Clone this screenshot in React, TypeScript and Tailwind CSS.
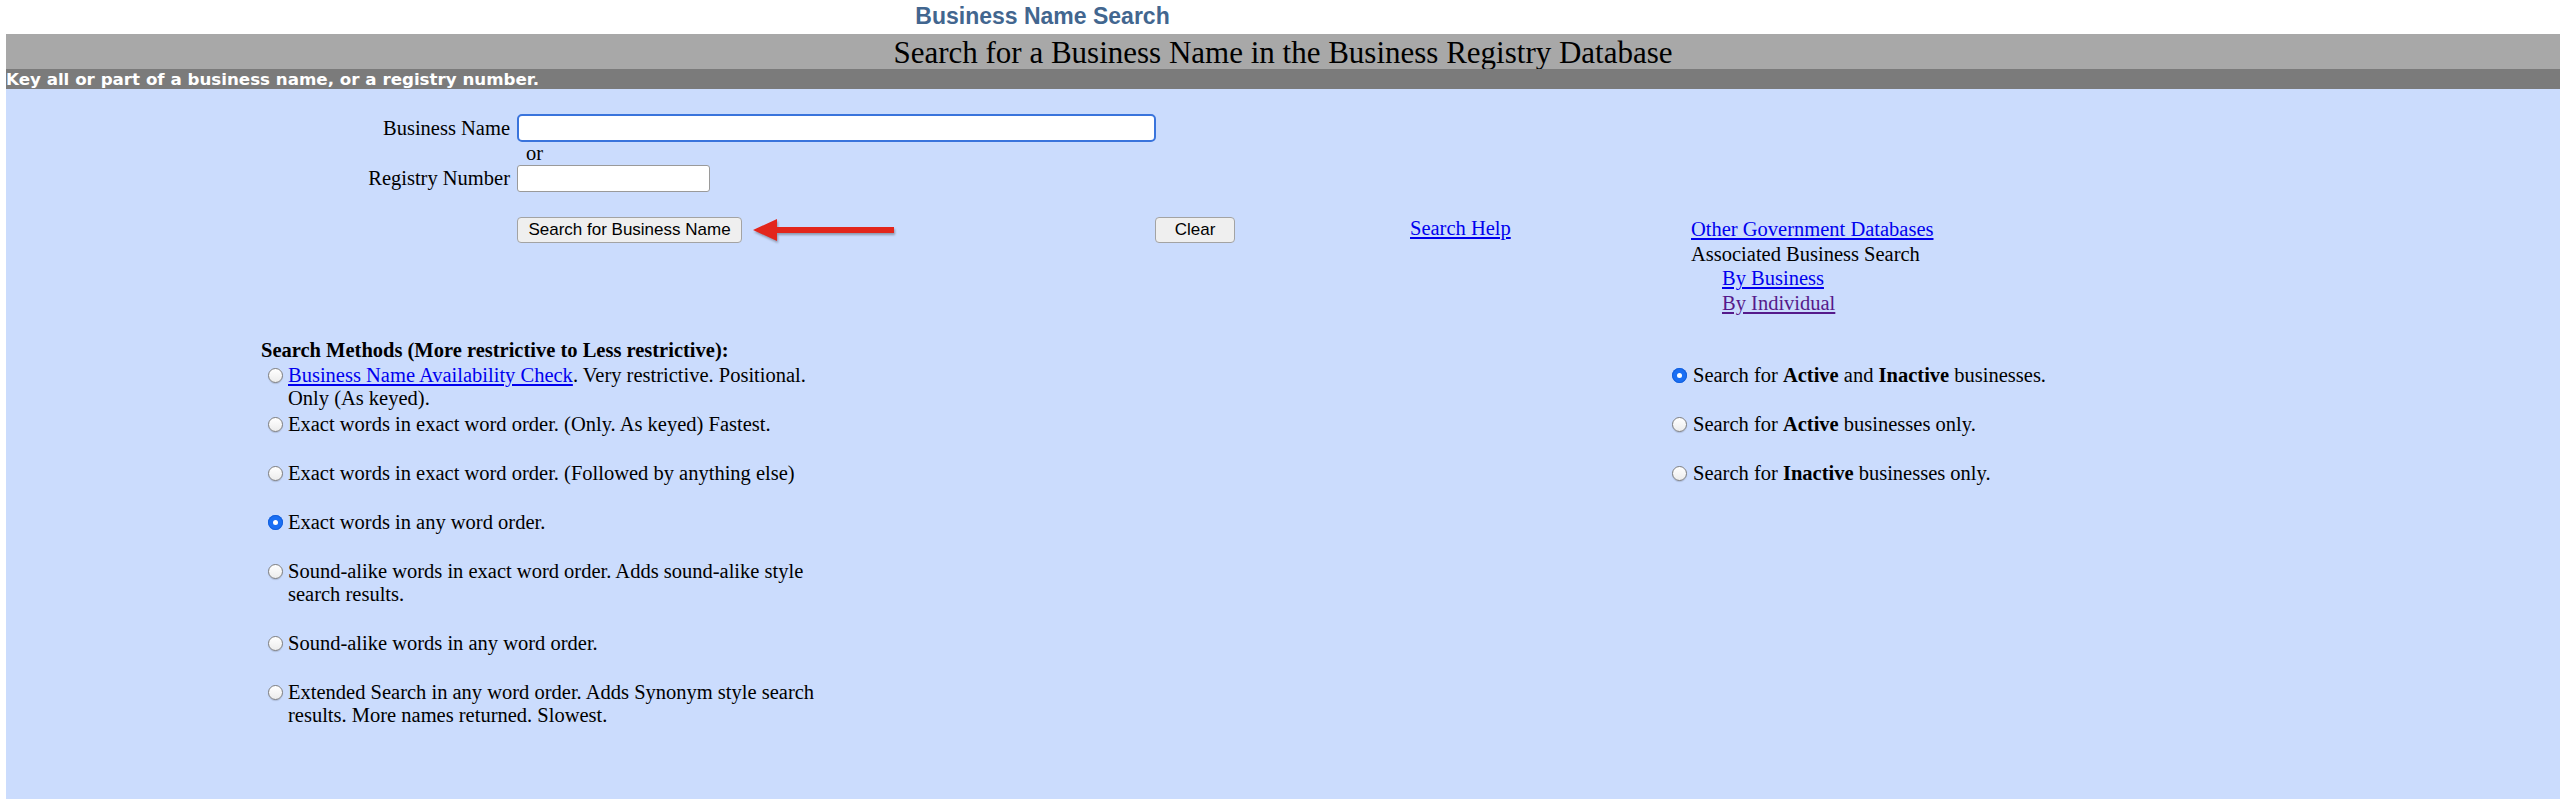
import type { ReactNode } from 'react';

const serif = "font-['Liberation_Serif','Times_New_Roman',serif]";
const sans = "font-['Liberation_Sans',Arial,sans-serif]";

function Radio({ checked = false }: { checked?: boolean }) {
  if (checked) {
    return (
      <span className="mt-[4px] flex h-[15px] w-[15px] shrink-0 items-center justify-center rounded-full bg-[#1a6ff4] shadow-[inset_0_0_0_1px_#1460dc]">
        <span className="h-[5px] w-[5px] rounded-full bg-white" />
      </span>
    );
  }
  return (
    <span className="mt-[4px] block h-[15px] w-[15px] shrink-0 rounded-full border border-[#7e7e7e] bg-gradient-to-b from-white to-[#ececec] shadow-[0_1px_1px_rgba(0,0,0,0.15)]" />
  );
}

function TextLink({ children, visited = false }: { children: ReactNode; visited?: boolean }) {
  return (
    <a
      href="#"
      className={visited ? 'text-[#551a8b] underline underline-offset-[2px]' : 'text-[#0000ee] underline underline-offset-[2px]'}
    >
      {children}
    </a>
  );
}

type Row = {
  checked?: boolean;
  body: ReactNode;
  blank?: boolean;
  status?: ReactNode;
  statusChecked?: boolean;
};

const ROWS: Row[] = [
  {
    body: (
      <>
        <TextLink>Business Name Availability Check</TextLink>. Very restrictive. Positional.
        <br />
        Only (As keyed).
      </>
    ),
    status: (
      <>
        Search for <b>Active</b> and <b>Inactive</b> businesses.
      </>
    ),
    statusChecked: true,
  },
  {
    body: 'Exact words in exact word order. (Only. As keyed) Fastest.',
    blank: true,
    status: (
      <>
        Search for <b>Active</b> businesses only.
      </>
    ),
  },
  {
    body: 'Exact words in exact word order. (Followed by anything else)',
    blank: true,
    status: (
      <>
        Search for <b>Inactive</b> businesses only.
      </>
    ),
  },
  { checked: true, body: 'Exact words in any word order.', blank: true },
  {
    body: (
      <>
        Sound-alike words in exact word order. Adds sound-alike style
        <br />
        search results.
      </>
    ),
    blank: true,
  },
  { body: 'Sound-alike words in any word order.', blank: true },
  {
    body: (
      <>
        Extended Search in any word order. Adds Synonym style search
        <br />
        results. More names returned. Slowest.
      </>
    ),
  },
];

export default function App() {
  return (
    <div className={`min-h-[804px] bg-white pl-[6px] text-black ${serif}`}>
      {/* page title */}
      <div className="h-[34px] w-[2073px] pt-[3px] text-center">
        <span className={`text-[23px] font-bold leading-[26px] text-[#42668f] ${sans}`}>Business Name Search</span>
      </div>

      <div className="flex h-[35px] items-center justify-center overflow-hidden bg-[#a8a8a8] pt-[1px] text-[31px] leading-[33px]">
        Search for a Business Name in the Business Registry Database
      </div>

      <div className="h-[20px] overflow-hidden bg-[#7b7b7b] font-['DejaVu_Sans',Verdana,sans-serif] text-[16.7px] font-bold leading-[20px] text-white">
        Key all or part of a business name, or a registry number.
      </div>

      <div className="h-[710px] bg-[#cbdcfd] pt-[25px] text-[20.5px] leading-[23px]">
        {/* name / number inputs */}
        <div className="flex h-[28px] items-center">
          <label className="w-[505px] pr-[1px] text-right">Business Name</label>
          <input
            type="text"
            className="ml-[6px] h-[28px] w-[639px] rounded-[5px] border-[2.5px] border-[#3a74dc] bg-white outline-none"
          />
        </div>
        <div className="ml-[520px] h-[23px]">or</div>
        <div className="flex h-[27px] items-center">
          <label className="w-[505px] pr-[1px] text-right">Registry Number</label>
          <input
            type="text"
            className="ml-[6px] h-[27px] w-[193px] rounded-[3px] border border-[#9a9a9a] bg-white outline-none"
          />
        </div>

        {/* actions */}
        <div className="mt-[25px] flex items-start">
          <div className="ml-[511px] flex w-[638px] items-center">
            <button
              type="button"
              className={`h-[26px] w-[225px] rounded-[4px] border border-[#a3a3a3] bg-[#efefef] text-[17px] leading-[24px] ${sans}`}
            >
              Search for Business Name
            </button>
            <svg
              width="142"
              height="26"
              viewBox="0 0 142 26"
              className="ml-[11px] drop-shadow-[1px_2px_1px_rgba(0,0,0,0.3)]"
            >
              <polygon points="0,13 24,2 24,10 141,10 141,16 24,16 24,24" fill="#e3261c" />
            </svg>
          </div>
          <div className="w-[255px]">
            <button
              type="button"
              className={`h-[26px] w-[80px] rounded-[4px] border border-[#a3a3a3] bg-[#efefef] text-[17px] leading-[24px] ${sans}`}
            >
              Clear
            </button>
          </div>
          <div className="w-[281px]">
            <TextLink>Search Help</TextLink>
          </div>
          <div className="flex flex-col leading-[24.5px]">
            <div>
              <TextLink>Other Government Databases</TextLink>
            </div>
            <div>Associated Business Search</div>
            <div className="pl-[31px]">
              <TextLink>By Business</TextLink>
            </div>
            <div className="pl-[31px]">
              <TextLink visited>By Individual</TextLink>
            </div>
          </div>
        </div>

        {/* search methods and status filter */}
        <div className="ml-[255px] mt-[24px]">
          <div className="mb-[2px] font-bold">Search Methods (More restrictive to Less restrictive):</div>
          {ROWS.map((row, i) => (
            <div key={i} className="flex items-start pb-[3px]">
              <div className="flex w-[1407px] items-start">
                <span className="ml-[7px]">
                  <Radio checked={row.checked} />
                </span>
                <div className="ml-[5px]">
                  <div>{row.body}</div>
                  {row.blank && <div className="h-[23px]" />}
                </div>
              </div>
              {row.status && (
                <div className="flex items-start">
                  <span className="ml-[4px]">
                    <Radio checked={row.statusChecked} />
                  </span>
                  <div className="ml-[6px]">{row.status}</div>
                </div>
              )}
            </div>
          ))}
        </div>
      </div>
    </div>
  );
}
